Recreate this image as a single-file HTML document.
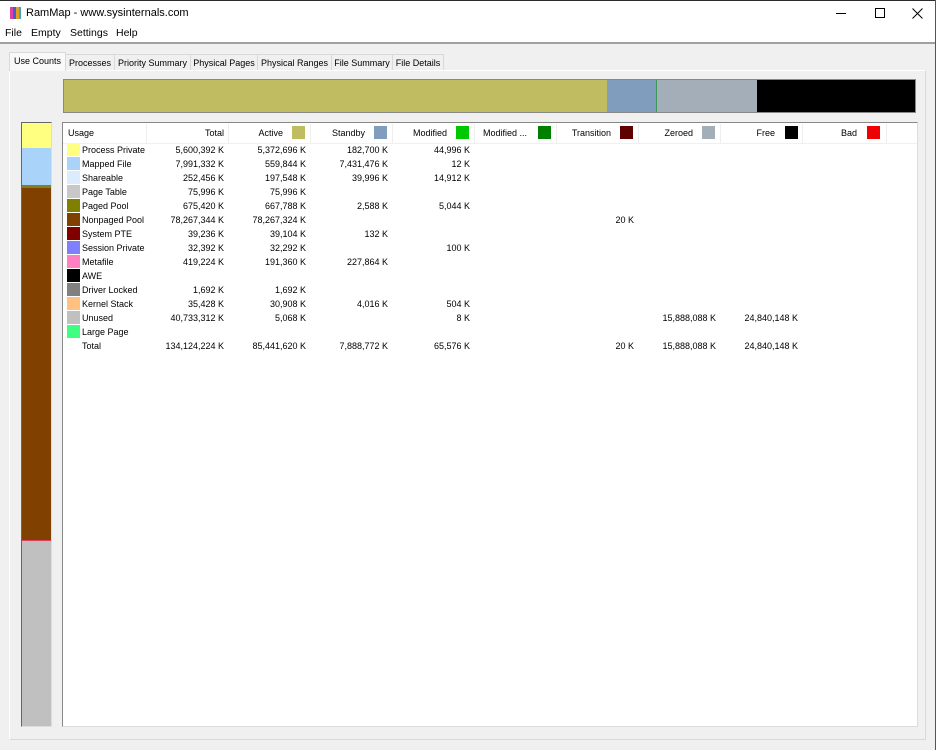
<!DOCTYPE html>
<html><head><meta charset="utf-8"><style>
*{margin:0;padding:0;box-sizing:border-box}
body{width:936px;height:750px;overflow:hidden;background:#f0f0f0;font-family:Tahoma,"Liberation Sans",sans-serif;font-size:9px;color:#000;position:relative}
.a{position:absolute;white-space:nowrap}
.r{text-align:right}
.sw{position:absolute;width:13px;height:13px}
.t{position:absolute;top:54px;height:16px;border:1px solid #d9d9d9;border-bottom:none;background:#f0f0f0;padding-top:3px;font-size:9px;text-align:center;overflow:hidden;white-space:nowrap}
.m{position:absolute;top:27px;font-size:10.5px;font-family:'Liberation Sans',sans-serif}
</style></head><body>
<div class="a" style="left:0;top:0;width:936px;height:1px;background:#2b2b2b"></div>
<div class="a" style="left:0;top:1px;width:936px;height:41px;background:#fff"></div>
<div class="a" style="left:10px;top:7px;width:3px;height:12px;background:#e040a0"></div>
<div class="a" style="left:13px;top:7px;width:3px;height:12px;background:#4060d0"></div>
<div class="a" style="left:16px;top:7px;width:3px;height:12px;background:#e0a020"></div>
<div class="a" style="left:19px;top:7px;width:2px;height:12px;background:#40a0d0"></div>
<div class="a" style="left:26px;top:7px;font-size:11px;font-family:'Liberation Sans',sans-serif">RamMap - www.sysinternals.com</div>
<div class="a" style="left:836px;top:13px;width:10px;height:1px;background:#000"></div>
<div class="a" style="left:875px;top:8px;width:10px;height:10px;border:1px solid #000"></div>
<svg class="a" style="left:912px;top:8px" width="11" height="11"><path d="M0.5 0.5L10.5 10.5M10.5 0.5L0.5 10.5" stroke="#000" stroke-width="1"/></svg>
<div class="m" style="left:5px">File</div>
<div class="m" style="left:31px">Empty</div>
<div class="m" style="left:70px">Settings</div>
<div class="m" style="left:116px">Help</div>
<div class="a" style="left:0;top:42px;width:936px;height:2px;background:#a0a0a0"></div>
<div class="a" style="left:935px;top:0;width:1px;height:750px;background:#555"></div>

<div class="a" style="left:9px;top:70px;width:917px;height:670px;border:1px solid #fff;border-right-color:#d9d9d9;border-bottom-color:#d9d9d9;background:#f0f0f0"></div>
<div class="t" style="left:9px;top:52px;width:57px;height:19px;background:#f9f9f9;padding-top:3px">Use Counts</div>
<div class="t" style="left:65px;width:50px">Processes</div>
<div class="t" style="left:114px;width:77px">Priority Summary</div>
<div class="t" style="left:190px;width:68px">Physical Pages</div>
<div class="t" style="left:257px;width:75px">Physical Ranges</div>
<div class="t" style="left:331px;width:62px">File Summary</div>
<div class="t" style="left:392px;width:52px">File Details</div>

<div class="a" style="left:63px;top:79px;width:853px;height:34px;border:1px solid #888;background:#bfbc61"></div>
<div class="a" style="left:607px;top:80px;width:49px;height:32px;background:#819dbd"></div>
<div class="a" style="left:656px;top:80px;width:1px;height:32px;background:#3a9a5a"></div>
<div class="a" style="left:657px;top:80px;width:100px;height:32px;background:#a3aeb9"></div>
<div class="a" style="left:757px;top:80px;width:158px;height:32px;background:#000"></div>

<div class="a" style="left:21px;top:122px;width:31px;height:605px;border:1px solid #666;border-right-color:#ddd;border-bottom-color:#ddd;background:#c0c0c0"></div>
<div class="a" style="left:22px;top:123px;width:29px;height:25px;background:#ffff80"></div>
<div class="a" style="left:22px;top:148px;width:29px;height:37px;background:#aad3fa"></div>
<div class="a" style="left:22px;top:185px;width:29px;height:3px;background:#808020"></div>
<div class="a" style="left:22px;top:188px;width:29px;height:352px;background:#804000"></div>
<div class="a" style="left:22px;top:540px;width:29px;height:1px;background:#e04060"></div>

<div class="a" style="left:62px;top:122px;width:856px;height:605px;border:1px solid #888;border-right-color:#ddd;border-bottom-color:#ddd;background:#fff"></div>
<div class="a" style="left:63px;top:123px;width:854px;height:21px;border-bottom:1px solid #f0f0f0"></div>
<div class="a" style="left:146px;top:124px;width:1px;height:19px;background:#eee"></div>
<div class="a" style="left:228px;top:124px;width:1px;height:19px;background:#eee"></div>
<div class="a" style="left:310px;top:124px;width:1px;height:19px;background:#eee"></div>
<div class="a" style="left:392px;top:124px;width:1px;height:19px;background:#eee"></div>
<div class="a" style="left:474px;top:124px;width:1px;height:19px;background:#eee"></div>
<div class="a" style="left:556px;top:124px;width:1px;height:19px;background:#eee"></div>
<div class="a" style="left:638px;top:124px;width:1px;height:19px;background:#eee"></div>
<div class="a" style="left:720px;top:124px;width:1px;height:19px;background:#eee"></div>
<div class="a" style="left:802px;top:124px;width:1px;height:19px;background:#eee"></div>
<div class="a" style="left:886px;top:124px;width:1px;height:19px;background:#eee"></div>

<div class="a" style="left:68px;top:128px">Usage</div>
<div class="a r" style="left:150px;top:128px;width:74px">Total</div>
<div class="a r" style="left:232px;top:128px;width:51px">Active</div><div class="sw" style="left:292px;top:126px;background:#bfbc61"></div>
<div class="a r" style="left:314px;top:128px;width:51px">Standby</div><div class="sw" style="left:374px;top:126px;background:#819dbd"></div>
<div class="a r" style="left:396px;top:128px;width:51px">Modified</div><div class="sw" style="left:456px;top:126px;background:#00c800"></div>
<div class="a" style="left:483px;top:128px">Modified ...</div><div class="sw" style="left:538px;top:126px;background:#008000"></div>
<div class="a r" style="left:560px;top:128px;width:51px">Transition</div><div class="sw" style="left:620px;top:126px;background:#600000"></div>
<div class="a r" style="left:642px;top:128px;width:51px">Zeroed</div><div class="sw" style="left:702px;top:126px;background:#a3aeb9"></div>
<div class="a r" style="left:724px;top:128px;width:51px">Free</div><div class="sw" style="left:785px;top:126px;background:#000"></div>
<div class="a r" style="left:806px;top:128px;width:51px">Bad</div><div class="sw" style="left:867px;top:126px;background:#f00000"></div>

<div class="sw" style="left:67px;top:143px;background:#ffff80"></div><div class="a" style="left:82px;top:145px">Process Private</div>
<div class="sw" style="left:67px;top:157px;background:#aad3fa"></div><div class="a" style="left:82px;top:159px">Mapped File</div>
<div class="sw" style="left:67px;top:171px;background:#dcecfc"></div><div class="a" style="left:82px;top:173px">Shareable</div>
<div class="sw" style="left:67px;top:185px;background:#c8c8c8"></div><div class="a" style="left:82px;top:187px">Page Table</div>
<div class="sw" style="left:67px;top:199px;background:#808000"></div><div class="a" style="left:82px;top:201px">Paged Pool</div>
<div class="sw" style="left:67px;top:213px;background:#804000"></div><div class="a" style="left:82px;top:215px">Nonpaged Pool</div>
<div class="sw" style="left:67px;top:227px;background:#800000"></div><div class="a" style="left:82px;top:229px">System PTE</div>
<div class="sw" style="left:67px;top:241px;background:#8080ff"></div><div class="a" style="left:82px;top:243px">Session Private</div>
<div class="sw" style="left:67px;top:255px;background:#ff80c0"></div><div class="a" style="left:82px;top:257px">Metafile</div>
<div class="sw" style="left:67px;top:269px;background:#000"></div><div class="a" style="left:82px;top:271px">AWE</div>
<div class="sw" style="left:67px;top:283px;background:#808080"></div><div class="a" style="left:82px;top:285px">Driver Locked</div>
<div class="sw" style="left:67px;top:297px;background:#ffc080"></div><div class="a" style="left:82px;top:299px">Kernel Stack</div>
<div class="sw" style="left:67px;top:311px;background:#c0c0c0"></div><div class="a" style="left:82px;top:313px">Unused</div>
<div class="sw" style="left:67px;top:325px;background:#40ff80"></div><div class="a" style="left:82px;top:327px">Large Page</div>
<div class="a" style="left:82px;top:341px">Total</div>

<div class="a r" style="left:124px;top:143px;width:100px;line-height:14px">5,600,392 K<br>7,991,332 K<br>252,456 K<br>75,996 K<br>675,420 K<br>78,267,344 K<br>39,236 K<br>32,392 K<br>419,224 K<br>&nbsp;<br>1,692 K<br>35,428 K<br>40,733,312 K<br>&nbsp;<br>134,124,224 K</div>
<div class="a r" style="left:206px;top:143px;width:100px;line-height:14px">5,372,696 K<br>559,844 K<br>197,548 K<br>75,996 K<br>667,788 K<br>78,267,324 K<br>39,104 K<br>32,292 K<br>191,360 K<br>&nbsp;<br>1,692 K<br>30,908 K<br>5,068 K<br>&nbsp;<br>85,441,620 K</div>
<div class="a r" style="left:288px;top:143px;width:100px;line-height:14px">182,700 K<br>7,431,476 K<br>39,996 K<br>&nbsp;<br>2,588 K<br>&nbsp;<br>132 K<br>&nbsp;<br>227,864 K<br>&nbsp;<br>&nbsp;<br>4,016 K<br>&nbsp;<br>&nbsp;<br>7,888,772 K</div>
<div class="a r" style="left:370px;top:143px;width:100px;line-height:14px">44,996 K<br>12 K<br>14,912 K<br>&nbsp;<br>5,044 K<br>&nbsp;<br>&nbsp;<br>100 K<br>&nbsp;<br>&nbsp;<br>&nbsp;<br>504 K<br>8 K<br>&nbsp;<br>65,576 K</div>
<div class="a r" style="left:534px;top:215px;width:100px">20 K</div>
<div class="a r" style="left:534px;top:341px;width:100px">20 K</div>
<div class="a r" style="left:616px;top:313px;width:100px">15,888,088 K</div>
<div class="a r" style="left:616px;top:341px;width:100px">15,888,088 K</div>
<div class="a r" style="left:698px;top:313px;width:100px">24,840,148 K</div>
<div class="a r" style="left:698px;top:341px;width:100px">24,840,148 K</div>
</body></html>
